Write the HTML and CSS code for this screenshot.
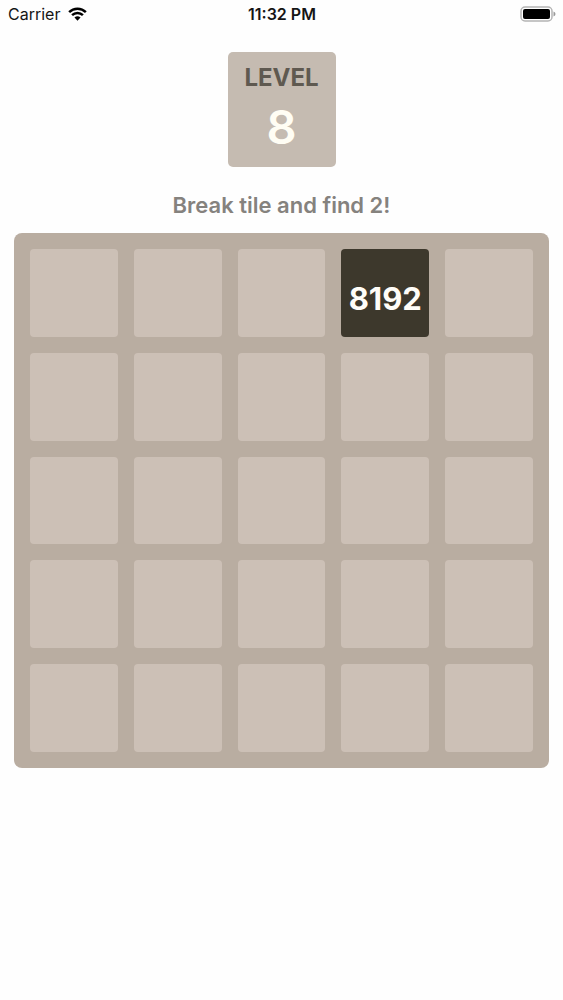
FILE: index.html
```html
<!DOCTYPE html>
<html lang="en">
<head>
<meta charset="utf-8">
<meta name="viewport" content="width=device-width, initial-scale=1">
<title>Level 8</title>
<link rel="stylesheet" href="styles.css">
</head>
<body>
<header class="status">
  <div class="carrier">
    <span>Carrier</span>
    <svg class="wifi" viewBox="0 0 20 14" aria-hidden="true">
      <path d="M1.2 5.1a12.5 12.5 0 0 1 17.6 0M4.3 8.3a8.1 8.1 0 0 1 11.4 0" />
      <path class="dot" d="M6.8 10.8a4.6 4.6 0 0 1 6.4 0L10 14z" />
    </svg>
  </div>
  <time class="clock">11:32 PM</time>
  <svg class="battery" viewBox="0 0 36 16" aria-hidden="true">
    <rect class="shell" x="1" y="1" width="31" height="14" rx="4" />
    <rect class="charge" x="3" y="3" width="27" height="10" rx="2" />
    <path class="cap" d="M33.5 5.5q2 .7 2 2.5t-2 2.5z" />
  </svg>
</header>
<main class="game">
  <section class="level">
    <h1 class="level-label">LEVEL</h1>
    <p class="level-number">8</p>
  </section>
  <p class="hint">Break tile and find 2!</p>
  <div class="board">
    <div class="tile"></div><div class="tile"></div><div class="tile"></div><div class="tile tile-8192">8192</div><div class="tile"></div>
    <div class="tile"></div><div class="tile"></div><div class="tile"></div><div class="tile"></div><div class="tile"></div>
    <div class="tile"></div><div class="tile"></div><div class="tile"></div><div class="tile"></div><div class="tile"></div>
    <div class="tile"></div><div class="tile"></div><div class="tile"></div><div class="tile"></div><div class="tile"></div>
    <div class="tile"></div><div class="tile"></div><div class="tile"></div><div class="tile"></div><div class="tile"></div>
  </div>
</main>
</body>
</html>
```
FILE: styles.css
```css
* { box-sizing: border-box; }
body {
  margin: 0;
  background: #fefefe;
  color: #151515;
  font-family: Inter, Roboto, sans-serif;
}
h1, p { margin: 0; }
.status {
  display: grid;
  grid-template-columns: 1fr auto 1fr;
  align-items: center;
  height: 28px;
  padding: 0 7px 0 8px;
  font-size: 16px;
  line-height: 28px;
}
.carrier { display: flex; align-items: center; gap: 8px; }
.wifi { width: 19px; height: 14px; fill: none; stroke: #000; stroke-width: 2.6; }
.wifi .dot { fill: #000; stroke: none; }
.clock { font-weight: 600; }
.battery { justify-self: end; width: 36px; height: 16px; }
.shell { fill: #fff; stroke: #b4b4b4; stroke-width: 1.5; }
.charge { fill: #000; }
.cap { fill: #999; }
.game {
  display: flex;
  flex-direction: column;
  align-items: center;
  padding: 24px 14px;
}
.level {
  min-width: 108px;
  padding: 10px 16px 7px;
  border-radius: 5px;
  background: #c5bbb1;
  text-align: center;
}
.level-label {
  color: #5f5950;
  font-size: 24px;
  font-weight: 700;
  line-height: 32px;
}
.level-number {
  color: #fffdf4;
  font-size: 47px;
  font-weight: 600;
  line-height: 66px;
}
.hint {
  margin: 22px 0 12px;
  color: #85827e;
  font-size: 22px;
  font-weight: 600;
  line-height: 32px;
}
.board {
  display: grid;
  grid-template-columns: repeat(5, 1fr);
  gap: 16px;
  width: 100%;
  padding: 16px;
  border-radius: 8px;
  background: #b9ada1;
}
.tile {
  display: flex;
  align-items: center;
  justify-content: center;
  min-width: 0;
  aspect-ratio: 1;
  border-radius: 4px;
  background: #ccc0b6;
}
.tile-8192 {
  padding-top: 12px;
  background: #3d382c;
  color: #fffdf8;
  font-size: 31px;
  font-weight: 700;
}
```
